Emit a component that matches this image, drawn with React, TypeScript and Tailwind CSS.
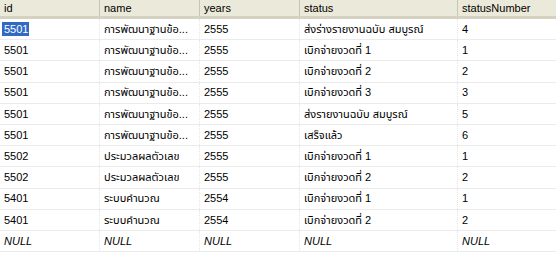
const columns = [
  { key: 'id', label: 'id', width: 'w-[99px]' },
  { key: 'name', label: 'name', width: 'w-[100px]' },
  { key: 'years', label: 'years', width: 'w-[100px]' },
  { key: 'status', label: 'status', width: 'w-[158px]' },
  { key: 'statusNumber', label: 'statusNumber', width: 'flex-1' },
];

const rows = [
  ['5501', 'การพัฒนาฐานข้อ...', '2555', 'ส่งร่างรายงานฉบับ สมบูรณ์', '4'],
  ['5501', 'การพัฒนาฐานข้อ...', '2555', 'เบิกจ่ายงวดที่ 1', '1'],
  ['5501', 'การพัฒนาฐานข้อ...', '2555', 'เบิกจ่ายงวดที่ 2', '2'],
  ['5501', 'การพัฒนาฐานข้อ...', '2555', 'เบิกจ่ายงวดที่ 3', '3'],
  ['5501', 'การพัฒนาฐานข้อ...', '2555', 'ส่งรายงานฉบับ สมบูรณ์', '5'],
  ['5501', 'การพัฒนาฐานข้อ...', '2555', 'เสร็จแล้ว', '6'],
  ['5502', 'ประมวลผลตัวเลข', '2555', 'เบิกจ่ายงวดที่ 1', '1'],
  ['5502', 'ประมวลผลตัวเลข', '2555', 'เบิกจ่ายงวดที่ 2', '2'],
  ['5401', 'ระบบคำนวณ', '2554', 'เบิกจ่ายงวดที่ 1', '1'],
  ['5401', 'ระบบคำนวณ', '2554', 'เบิกจ่ายงวดที่ 2', '2'],
];

function App() {
  return (
    <div
      className="w-[556px] h-[254px] overflow-hidden bg-white text-black text-[11px]"
      style={{ fontFamily: '"Liberation Sans", "Noto Sans", "Noto Sans Thai", sans-serif' }}
    >
      {/* header */}
      <div className="flex h-[19px] bg-[#ebe9d9] border-b-[3px] border-[#d6d2c2]">
        {columns.map((c, i) => (
          <div
            key={c.key}
            className={`${c.width} flex items-center pl-[4px] ${
              i > 0 ? 'border-l border-[#c8c5b4]' : ''
            }`}
          >
            {c.label}
          </div>
        ))}
      </div>

      {/* body */}
      {rows.map((r, ri) => (
        <div key={ri} className="flex h-[21.2px] border-b border-[#ebebeb]">
          {r.map((cell, ci) => (
            <div
              key={ci}
              className={`${columns[ci].width} flex items-center pl-[4px] whitespace-nowrap overflow-hidden ${
                ci > 0 ? 'border-l border-dotted border-[#e6e6e6]' : ''
              }`}
            >
              {ri === 0 && ci === 0 ? (
                <span className="bg-[#316ac5] text-white -ml-[2px] pl-[2px] pr-[1px] leading-[14px]">
                  {cell}
                </span>
              ) : (
                cell
              )}
            </div>
          ))}
        </div>
      ))}

      <div className="flex h-[21.2px] border-b border-[#ebebeb]">
        {columns.map((c, ci) => (
          <div
            key={c.key}
            className={`${c.width} flex items-center pl-[4px] italic ${
              ci > 0 ? 'border-l border-dotted border-[#e6e6e6]' : ''
            }`}
          >
            NULL
          </div>
        ))}
      </div>
    </div>
  );
}

export default App;
